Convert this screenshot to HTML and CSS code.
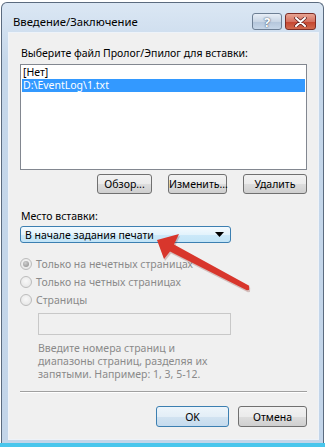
FILE: index.html
```html
<!DOCTYPE html>
<html lang="ru">
<head>
    <meta charset="UTF-8">
    <meta name="viewport" content="width=device-width, initial-scale=1.0">
    <title>Введение/Заключение</title>
    <link rel="stylesheet" href="styles.css">
</head>
<body>
    <div class="window">
        <div class="titlebar">
            <span class="title">Введение/Заключение</span>
            <span class="tbtn help">?</span>
            <span class="tbtn close">
                <svg width="13" height="10" viewBox="0 0 13 10">
                    <path d="M2 1 L11 9 M11 1 L2 9" stroke="#5a1a1a" stroke-width="3.4" stroke-linecap="round"/>
                    <path d="M2 1 L11 9 M11 1 L2 9" stroke="#fff" stroke-width="2" stroke-linecap="round"/>
                </svg>
            </span>
        </div>

        <div class="content">
            <div class="label">Выберите файл Пролог/Эпилог для вставки:</div>
            <ul class="listbox">
                <li>[Нет]</li>
                <li class="selected">D:\EventLog\1.txt</li>
            </ul>
            <div class="btnrow">
                <button type="button" class="btn browse">Обзор...</button>
                <button type="button" class="btn edit">Изменить...</button>
                <button type="button" class="btn remove">Удалить</button>
            </div>

            <div class="label place">Место вставки:</div>
            <div class="combo">
                <span>В начале задания печати</span>
                <svg class="combo-arrow" width="9" height="5" viewBox="0 0 9 5"><path d="M0 0 H9 L4.5 5 Z" fill="#000"/></svg>
            </div>

            <div class="radios">
                <label class="radio checked"><span class="dot"></span>Только на нечетных страницах</label>
                <label class="radio"><span class="dot"></span>Только на четных страницах</label>
                <label class="radio"><span class="dot"></span>Страницы</label>
            </div>
            <div class="pages-input"></div>
            <p class="hint">Введите номера страниц и<br>диапазоны страниц, разделяя их<br>запятыми. Например: 1, 3, 5-12.</p>

            <div class="separator"></div>
            <div class="btnrow footer">
                <button type="button" class="btn ok">OK</button>
                <button type="button" class="btn cancel">Отмена</button>
            </div>
        </div>
    </div>
    <div class="taskbar"></div>

    <!-- красная стрелка поверх диалога -->
    <svg class="arrow" width="325" height="447" viewBox="0 0 325 447">
        <path d="M157 240 L179 234 L174 244.5 L249.2 285.8 L249 290 L246.8 290.2 L170 251.5 L164 259 Z" fill="#7a2a25" opacity="0.25" transform="translate(1 2)"/>
        <path d="M157 240 L179 234 L174 244.5 L249.2 285.8 L249 290 L246.8 290.2 L170 251.5 L164 259 Z" fill="#d8362c"/>
    </svg>
</body>
</html>
```

FILE: styles.css
```css
body {
    margin: 0;
    background: #fff;
    font-family: "Noto Sans", "Open Sans", sans-serif;
    font-size: 10.5px;
    color: #000;
    position: relative;
    width: 325px;
    height: 447px;
    overflow: hidden;
}

.window {
    margin: 2px 1px 0 1px;
    height: 441px;
    border: 1px solid #5b6b7f;
    border-bottom: none;
    border-radius: 6px 6px 0 0;
    background: linear-gradient(#dbe7f4, #c5d7ea 60px, #c3d5e9);
    padding: 0 4px 4px 6px;
    box-sizing: border-box;
}

.titlebar {
    display: flex;
    align-items: center;
    height: 29px;
    padding-top: 8px;
    box-sizing: border-box;
}

.title {
    flex: 1;
    padding-left: 5px;
    font-size: 11.3px;
    color: #000;
}

.tbtn {
    height: 17px;
    box-sizing: border-box;
    border: 1px solid #6d7f94;
    border-radius: 3px;
    display: flex;
    align-items: center;
    justify-content: center;
}

.help {
    width: 30px;
    background: linear-gradient(#e7eef7, #c9d6e5 50%, #b3c5da 51%, #c6d6e8);
    color: #fff;
    font-weight: bold;
    font-size: 13px;
    text-shadow: 0 0 2px #4b5f78, 0 0 1px #4b5f78;
}

.close {
    width: 31px;
    margin-left: 3px;
    margin-right: 3px;
    border-color: #7c2d26;
    background: linear-gradient(#e8a493, #d57261 50%, #c4432e 51%, #d06a4f);
}

.content {
    height: 408px;
    box-sizing: border-box;
    background: #f0f0f0;
    border: 1px solid #eef3f9;
    padding: 13px 11px 0 11px;
}

.label {
    line-height: 14px;
    padding-left: 1px;
}

.listbox {
    list-style: none;
    margin: 4px 0 0 0;
    padding: 1px;
    height: 106px;
    box-sizing: border-box;
    background: #fff;
    border: 1px solid #828790;
}

.listbox li {
    line-height: 13px;
    padding-left: 1px;
}

.listbox .selected {
    background: #3399ff;
    color: #fff;
}

.btnrow {
    display: flex;
    justify-content: flex-end;
    gap: 16px;
    margin-top: 4px;
}

.btn {
    font-family: inherit;
    font-size: 10.5px;
    height: 20px;
    padding: 0;
    border: 1px solid #707070;
    border-radius: 3px;
    background: linear-gradient(#f2f2f2, #ebebeb 50%, #dddddd 51%, #cfcfcf);
    color: #000;
}

.browse { width: 55px; }
.edit { width: 59px; }
.remove { width: 64px; }

.place {
    margin-top: 15px;
}

.combo {
    margin-top: 3px;
    width: 211px;
    height: 17px;
    box-sizing: border-box;
    border: 1px solid #3c7fb1;
    border-radius: 3px;
    background: linear-gradient(#f4fafe, #e3f3fc 50%, #cce9f9 51%, #c2e4f7);
    display: flex;
    align-items: center;
    justify-content: space-between;
    padding: 0 6px 0 4px;
    line-height: 14px;
}

.radios {
    margin-top: 12px;
}

.radio {
    display: flex;
    align-items: center;
    gap: 4px;
    height: 18px;
    color: #8a8a8a;
}

.dot {
    width: 12px;
    height: 12px;
    box-sizing: border-box;
    border-radius: 50%;
    border: 1px solid #bcbcbc;
    background: radial-gradient(circle at 50% 40%, #f8f8f8, #e2e2e2);
    display: flex;
    align-items: center;
    justify-content: center;
}

.checked .dot::after {
    content: "";
    width: 6px;
    height: 6px;
    border-radius: 50%;
    background: radial-gradient(circle at 40% 35%, #d0d0d0, #8a8a8a);
}

.pages-input {
    margin: 4px 0 0 18px;
    width: 193px;
    height: 22px;
    box-sizing: border-box;
    border: 1px solid #c8c8c8;
    background: #f0f0f0;
}

.hint {
    margin: 7px 0 0 18px;
    line-height: 13px;
    color: #8a8a8a;
}

.separator {
    margin-top: 10px;
    border-top: 1px solid #a0a0a0;
    border-bottom: 1px solid #fff;
}

.footer {
    margin-top: 13px;
    gap: 9px;
}

.footer .btn {
    height: 21px;
}

.ok {
    width: 73px;
    border-color: #3c7fb1;
    background: linear-gradient(#edf5fb, #e3eef7 50%, #d2e3f1 51%, #c5dbee);
}

.cancel { width: 69px; }

.taskbar {
    height: 4px;
    background: #49c6ec;
}

.arrow {
    position: absolute;
    left: 0;
    top: 0;
    pointer-events: none;
}
```
